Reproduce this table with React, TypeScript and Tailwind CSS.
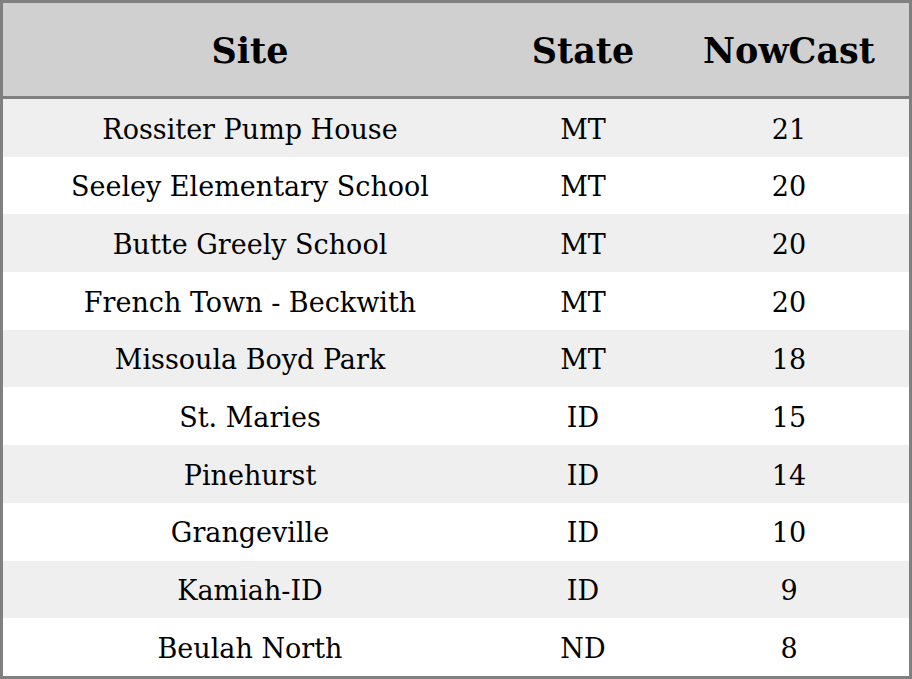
const rows = [
  ["Rossiter Pump House", "MT", "21"],
  ["Seeley Elementary School", "MT", "20"],
  ["Butte Greely School", "MT", "20"],
  ["French Town - Beckwith", "MT", "20"],
  ["Missoula Boyd Park", "MT", "18"],
  ["St. Maries", "ID", "15"],
  ["Pinehurst", "ID", "14"],
  ["Grangeville", "ID", "10"],
  ["Kamiah-ID", "ID", "9"],
  ["Beulah North", "ND", "8"],
];

export default function App() {
  return (
    <div className="w-[912px] h-[679px] border-[3px] border-[#808080] bg-white font-['DejaVu_Serif',serif] text-black">
      <div className="grid grid-cols-[494px_172px_240px] h-[96px] pt-1 items-center bg-[#d0d0d0] border-b-[3px] border-[#808080] text-[35px] font-bold text-center">
        <div>Site</div>
        <div>State</div>
        <div>NowCast</div>
      </div>
      {rows.map(([site, state, now], i) => (
        <div
          key={site}
          className={`grid grid-cols-[494px_172px_240px] h-[57.7px] pt-1 items-center text-center text-[27px] ${
            i % 2 === 0 ? "bg-[#efefef]" : "bg-white"
          }`}
        >
          <div>{site}</div>
          <div>{state}</div>
          <div>{now}</div>
        </div>
      ))}
    </div>
  );
}
